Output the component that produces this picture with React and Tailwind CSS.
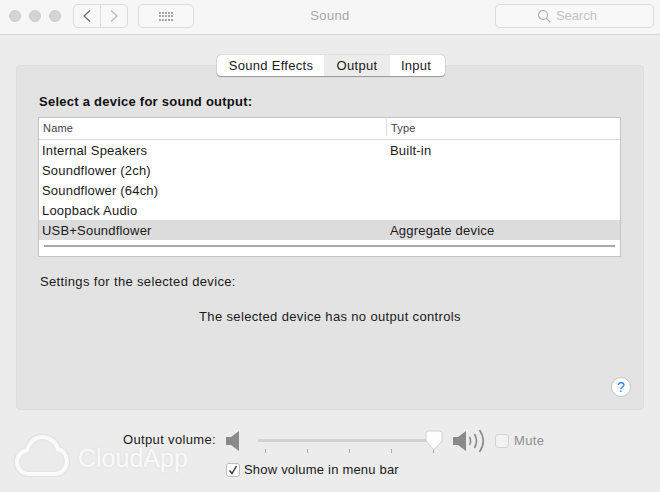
import React from "react";

const devices = [
  { name: "Internal Speakers", type: "Built-in" },
  { name: "Soundflower (2ch)", type: "" },
  { name: "Soundflower (64ch)", type: "" },
  { name: "Loopback Audio", type: "" },
  { name: "USB+Soundflower", type: "Aggregate device", selected: true },
];

const Speaker = ({ waves }) => (
  <svg width={waves ? 33 : 14} height="24" viewBox={waves ? "0 0 33 24" : "0 0 14 24"} className="shrink-0">
    <path d="M0 8h5l8-6v20l-8-6H0z" fill="#8a8a8a" />
    {waves && (
      <g fill="none" stroke="#8a8a8a" strokeWidth="1.6">
        <path d="M16.500 8q2.200 4 0 8" />
        <path d="M21.500 5q4 7 0 14" />
        <path d="M26.500 1q7.500 11 0 22" />
      </g>
    )}
  </svg>
);

const Ticks = () => (
  <div className="flex justify-between pl-[7px] mt-[7px]">
    {[0, 1, 2, 3, 4].map((t) => (
      <span key={t} className="w-px h-1 bg-[#a8a8a8]" />
    ))}
  </div>
);

const App = () => {
  return (
    <div className="relative w-[660px] h-[492px] overflow-hidden bg-[#ececec] text-[13px] leading-4 text-[#1a1a1a] font-['Liberation_Sans',Arial,sans-serif] tracking-[0.35px]">
      {/* title bar */}
      <div className="h-[35px] bg-[#f6f6f6] border-b border-[#d6d6d6] flex items-start pt-1 pl-[9px]">
        <div className="flex gap-2 mt-[6px]">
          <span className="w-3 h-3 rounded-full bg-[#d4d4d4] border border-[#cbcbcb]" />
          <span className="w-3 h-3 rounded-full bg-[#d4d4d4] border border-[#cbcbcb]" />
          <span className="w-3 h-3 rounded-full bg-[#d4d4d4] border border-[#cbcbcb]" />
        </div>
        <div className="flex ml-3">
          <div className="w-7 h-6 flex items-center justify-center border border-[#dcdcdc] rounded-l-[5px] bg-[#f8f8f8]">
            <svg width="10" height="14" viewBox="0 0 10 14">
              <path d="M8 1.500 2 7l6 5.500" fill="none" stroke="#6e6e6e" strokeWidth="1.300" />
            </svg>
          </div>
          <div className="w-7 h-6 -ml-px flex items-center justify-center border border-[#dcdcdc] rounded-r-[5px] bg-[#f8f8f8]">
            <svg width="10" height="14" viewBox="0 0 10 14">
              <path d="M2 1.500 8 7l-6 5.500" fill="none" stroke="#b8b8b8" strokeWidth="1.300" />
            </svg>
          </div>
        </div>
        <div className="w-14 h-6 ml-[10px] flex items-center justify-center border border-[#dcdcdc] rounded-[5px] bg-[#f8f8f8]">
          <div className="grid grid-cols-5 gap-x-px gap-y-[1.500px]">
            {Array.from({ length: 15 }).map((_, i) => (
              <span key={i} className="w-[2px] h-[2px] bg-[#a6a6a6]" />
            ))}
          </div>
        </div>
        <div className="flex-1 text-center text-[#a8a8a8] pt-[4px] pr-[29px]">Sound</div>
        <div className="w-[159px] h-6 mr-[6px] flex items-center justify-center gap-[5px] pr-[15px] border border-[#dcdcdc] rounded-[5px] bg-[#f8f8f8] text-[#c4c4c4] tracking-normal">
          <svg width="14" height="14" viewBox="0 0 14 14" fill="none" stroke="#a8a8a8" strokeWidth="1.100">
            <circle cx="6" cy="6" r="4.500" />
            <path d="m9.300 9.300 4 4" />
          </svg>
          <span>Search</span>
        </div>
      </div>

      {/* tabbed panel */}
      <div className="mt-[30px] mx-4 h-[345px] bg-[#e3e3e3] border border-[#dedede] rounded-[4px] relative pl-[21px] pr-[22px]">
        <div className="absolute -top-[11px] left-[200px] flex h-[21px] bg-white rounded-[4px] shadow-[0_0_1px_#777,0_1px_1px_#999] overflow-hidden leading-[22px]">
          <div className="w-[107px] text-center pl-px tracking-[0.3px]">Sound Effects</div>
          <div className="w-[66px] text-center bg-[#ececec]">Output</div>
          <div className="w-[55px] text-center pr-[3px] tracking-[0.2px]">Input</div>
        </div>

        <div className="pt-[28px] pl-px font-bold text-[#111] tracking-[0.25px]">Select a device for sound output:</div>

        <div className="mt-[7px] bg-white border border-[#c4c4c4] h-[140px] tracking-[0.2px]">
          <div className="flex h-[22px] border-b border-[#dcdcdc] text-[11px] text-[#444] items-center pb-[2px]">
            <div className="w-[347px] pl-[4px]">Name</div>
            <div className="border-l border-[#dcdcdc] pl-[4px] h-[17px] leading-[19px]">Type</div>
          </div>
          {devices.map((d) => (
            <div key={d.name} className={`flex h-5 items-center pt-[2px] ${d.selected ? "bg-[#dcdcdc]" : ""}`}>
              <div className="w-[351px] pl-[3px]">{d.name}</div>
              <div>{d.type}</div>
            </div>
          ))}
          <div className="h-[2px] mt-[5px] mx-[5px] bg-[#a9a9a9]" />
        </div>

        <div className="mt-[17px] ml-[2px]">Settings for the selected device:</div>
        <div className="mt-[19px] text-center pl-px">The selected device has no output controls</div>

        <div className="absolute right-[12px] bottom-[12px] w-5 h-5 rounded-full bg-white border border-[#c4c4c4] flex items-center justify-center text-[#1a7cf0] text-[14px]">
          ?
        </div>
      </div>

      {/* volume */}
      <div className="flex items-start mt-[19px] pl-[123px]">
        <div className="w-[103px] pt-[3px]">Output volume:</div>
        <Speaker />
        <div className="w-[176px] ml-[18px] pt-[10px] relative">
          <div className="h-[3px] bg-[#d2d2d2] rounded-full" />
          <Ticks />
          <svg width="18" height="22" viewBox="0 0 18 22" className="absolute right-[-9px] top-[1px]">
            <path d="M3.500 1h11a2.500 2.500 0 0 1 2.500 2.500V11l-8 9-8-9V3.500A2.500 2.500 0 0 1 3.500 1z" fill="#fdfdfd" stroke="#cfcfcf" />
          </svg>
        </div>
        <div className="ml-[19px]">
          <Speaker waves />
        </div>
        <div className="flex items-center ml-[9px] pt-[4px] text-[#8e8e8e]">
          <span className="w-[14px] h-[14px] mr-[5px] rounded-[3px] border border-[#d4d4d4] bg-[#f2f2f2]" />
          Mute
        </div>
      </div>

      <div className="flex items-center mt-[9px] pl-[226px] tracking-[0.2px]">
        <span className="w-[14px] h-[14px] mr-[4px] rounded-[3px] border border-[#bdbdbd] bg-white flex items-center justify-center">
          <svg width="10" height="10" viewBox="0 0 10 10">
            <path d="M1.500 5.500 4 8.500 8.500 1" fill="none" stroke="#333" strokeWidth="1.400" />
          </svg>
        </span>
        Show volume in menu bar
      </div>

      {/* CloudApp watermark */}
      <div className="absolute left-[15px] top-[434px] flex items-center text-white/80 text-[25px] tracking-normal [text-shadow:0_0_3px_rgba(0,0,0,0.08)]">
        <svg width="54" height="44" viewBox="0 0 54 44" fill="none" className="drop-shadow-[0_0_1px_rgba(0,0,0,0.15)]">
          <path d="M14 40C6 40 2 34 2 28c0-6 4-11 10-12C14 8 20 3 27 3c8 0 14 5 16 12 5 1 9 6 9 12 0 7-5 13-12 13z" stroke="#ffffff" strokeOpacity="0.85" strokeWidth="4" fill="#ffffff" fillOpacity="0.35" />
        </svg>
        <span className="ml-[9px] mt-[4px]">CloudApp</span>
      </div>
    </div>
  );
};

export default App;
